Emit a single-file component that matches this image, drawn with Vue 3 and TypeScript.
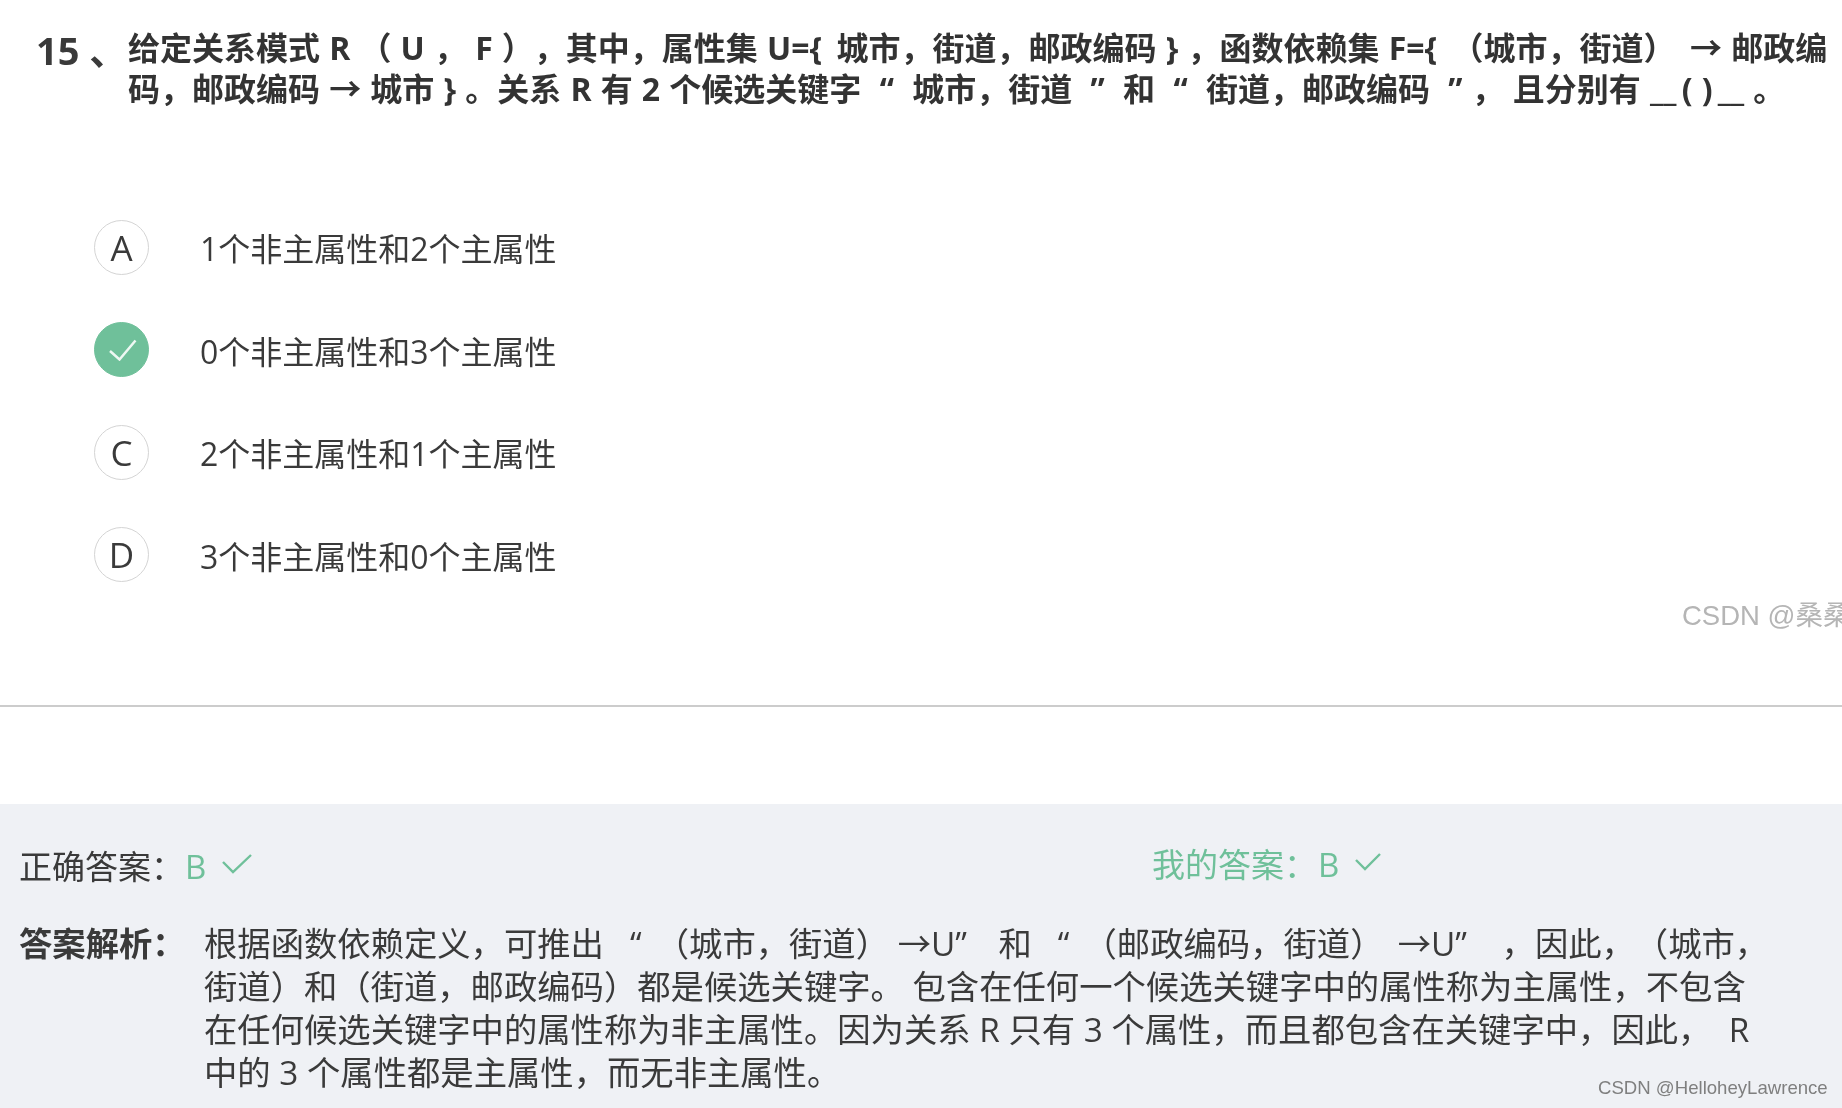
<script setup lang="ts">
interface Option { key: string; text: string; correct?: boolean }
const thin = '\u2009'
const titleLines: string[] = [
  `给定关系模式 R （ U ， F ），其中，属性集 U={ ${thin}城市，街道，邮政编码 } ，函数依赖集 F={ ${thin}（城市，街道） ${thin}→ 邮政编`,
  `码，邮政编码 → 城市 } 。关系 R 有 2 个候选关键字  “  城市，街道  ”  和  “  街道，邮政编码  ” ， 且分别有 __${thin}( )${thin}__ 。`,
]
const options: Option[] = [
  { key: 'A', text: '1个非主属性和2个主属性' },
  { key: 'B', text: '0个非主属性和3个主属性', correct: true },
  { key: 'C', text: '2个非主属性和1个主属性' },
  { key: 'D', text: '3个非主属性和0个主属性' },
]
const analysis: string[] = [
  `根据函数依赖定义，可推出   “ ${thin}（城市，街道） →U”   ${thin}和   “ ${thin}（邮政编码，街道）${thin} →U”    ，因此，（城市，`,
  '街道）和（街道，邮政编码）都是候选关键字。 包含在任何一个候选关键字中的属性称为主属性，不包含',
  '在任何候选关键字中的属性称为非主属性。因为关系 R 只有 3 个属性，而且都包含在关键字中，因此，  R',
  '中的 3 个属性都是主属性，而无非主属性。',
]
</script>

<template>
  <div class="page">
    <div class="question">
      <div class="num">15 、</div>
      <div class="title">
        <div v-for="l in titleLines" :key="l" class="line">{{ l }}</div>
      </div>
    </div>
    <div class="options">
      <div v-for="o in options" :key="o.key" class="option">
        <div class="badge" :class="{ ok: o.correct }">
          <svg v-if="o.correct" class="badge-check" width="28" height="22" viewBox="0 0 28 22"><path d="M1 12 L10.5 20.5 L26.5 1.5" fill="none" stroke="#eef8f3" stroke-width="2.5" /></svg>
          <template v-else>{{ o.key }}</template>
        </div>
        <div class="opt-text">{{ o.text }}</div>
      </div>
    </div>
    <div class="divider"></div>
    <div class="panel">
      <div class="answers">
        <div class="ans">
          正确答案：<span class="green letter">B</span>
          <svg class="tick" width="30" height="20" viewBox="0 0 30 20"><path d="M1 8 L11 18 L29 1" fill="none" stroke="#6fc09a" stroke-width="2.4" /></svg>
        </div>
        <div class="ans mine green">
          我的答案：<span class="letter">B</span>
          <svg class="tick" width="26" height="20" viewBox="0 0 26 20"><path d="M1 8 L10 17 L25 2" fill="none" stroke="#6fc09a" stroke-width="2.4" /></svg>
        </div>
      </div>
      <div class="analysis">
        <div class="label">答案解析：</div>
        <div class="body">
          <div v-for="l in analysis" :key="l" class="line">{{ l }}</div>
        </div>
      </div>
    </div>
    <div class="mark-top">CSDN @桑桑桑</div>
    <div class="mark-bottom">CSDN @HelloheyLawrence</div>
  </div>
</template>

<style>
html, body { margin: 0; background: #fff; overflow: hidden; }
</style>

<style scoped>
.page {
  position: relative;
  width: 1842px;
  height: 1108px;
  overflow: hidden;
  background: #fff;
  color: #3a3a3a;
  font-family: "Open Sans", "Noto Sans CJK SC", sans-serif;
  text-spacing-trim: space-all;
  display: flex;
  flex-direction: column;
  filter: blur(0.4px);
}
.line { white-space: pre; }
.question { flex: none; display: flex; height: 219px; padding: 27px 0 0 36px; box-sizing: border-box; }
.num { width: 92px; font-size: 38px; line-height: 46px; font-weight: 700; white-space: nowrap; }
.title { font-size: 32px; line-height: 41px; font-weight: 700; color: #333; word-spacing: 0.85px; }
.options { flex: none; display: flex; flex-direction: column; gap: 46.5px; padding-left: 94px; height: 486px; box-sizing: border-box; }
.option { display: flex; align-items: center; height: 56px; }
.badge {
  width: 55px; height: 55px; box-sizing: border-box; border-radius: 50%;
  border: 1.5px solid #d4d4d4; display: flex; align-items: center; justify-content: center;
  font-size: 35px; margin-right: 51px;
}
.badge.ok { background: #6fc09a; border-color: #6fc09a; }
.badge-check { margin-left: 3px; }
.opt-text { font-size: 32px; color: #3a3a3a; }
.divider { flex: none; height: 2px; background: #ccc; }
.panel { flex: none; margin-top: 97px; height: 304px; box-sizing: border-box; background: #eff1f5; padding: 38px 0 0 19px; }
.answers { display: flex; font-size: 33px; line-height: 50px; height: 50px; }
.ans { flex: none; display: flex; align-items: center; white-space: nowrap; width: 1133px; }
.ans.mine { margin-top: -4px; }
.green { color: #6fc09a; }
.letter { margin: 0 16px 0 1px; }
.tick { margin-top: -6px; }
.analysis { display: flex; margin-top: 30px; font-size: 33.35px; line-height: 43px; }
.label { width: 185px; font-weight: 700; white-space: nowrap; }
.mark-top {
  position: absolute; left: 1682px; top: 598px; white-space: nowrap;
  font-family: "Liberation Sans", "Noto Sans CJK SC", sans-serif; font-size: 27.5px; line-height: 36px; color: #b5b5b5;
}
.mark-bottom {
  position: absolute; left: 1598px; top: 1076px; white-space: nowrap;
  font-family: "Liberation Sans", sans-serif; font-size: 18.6px; line-height: 24px; color: #7f7f7f;
}
</style>
